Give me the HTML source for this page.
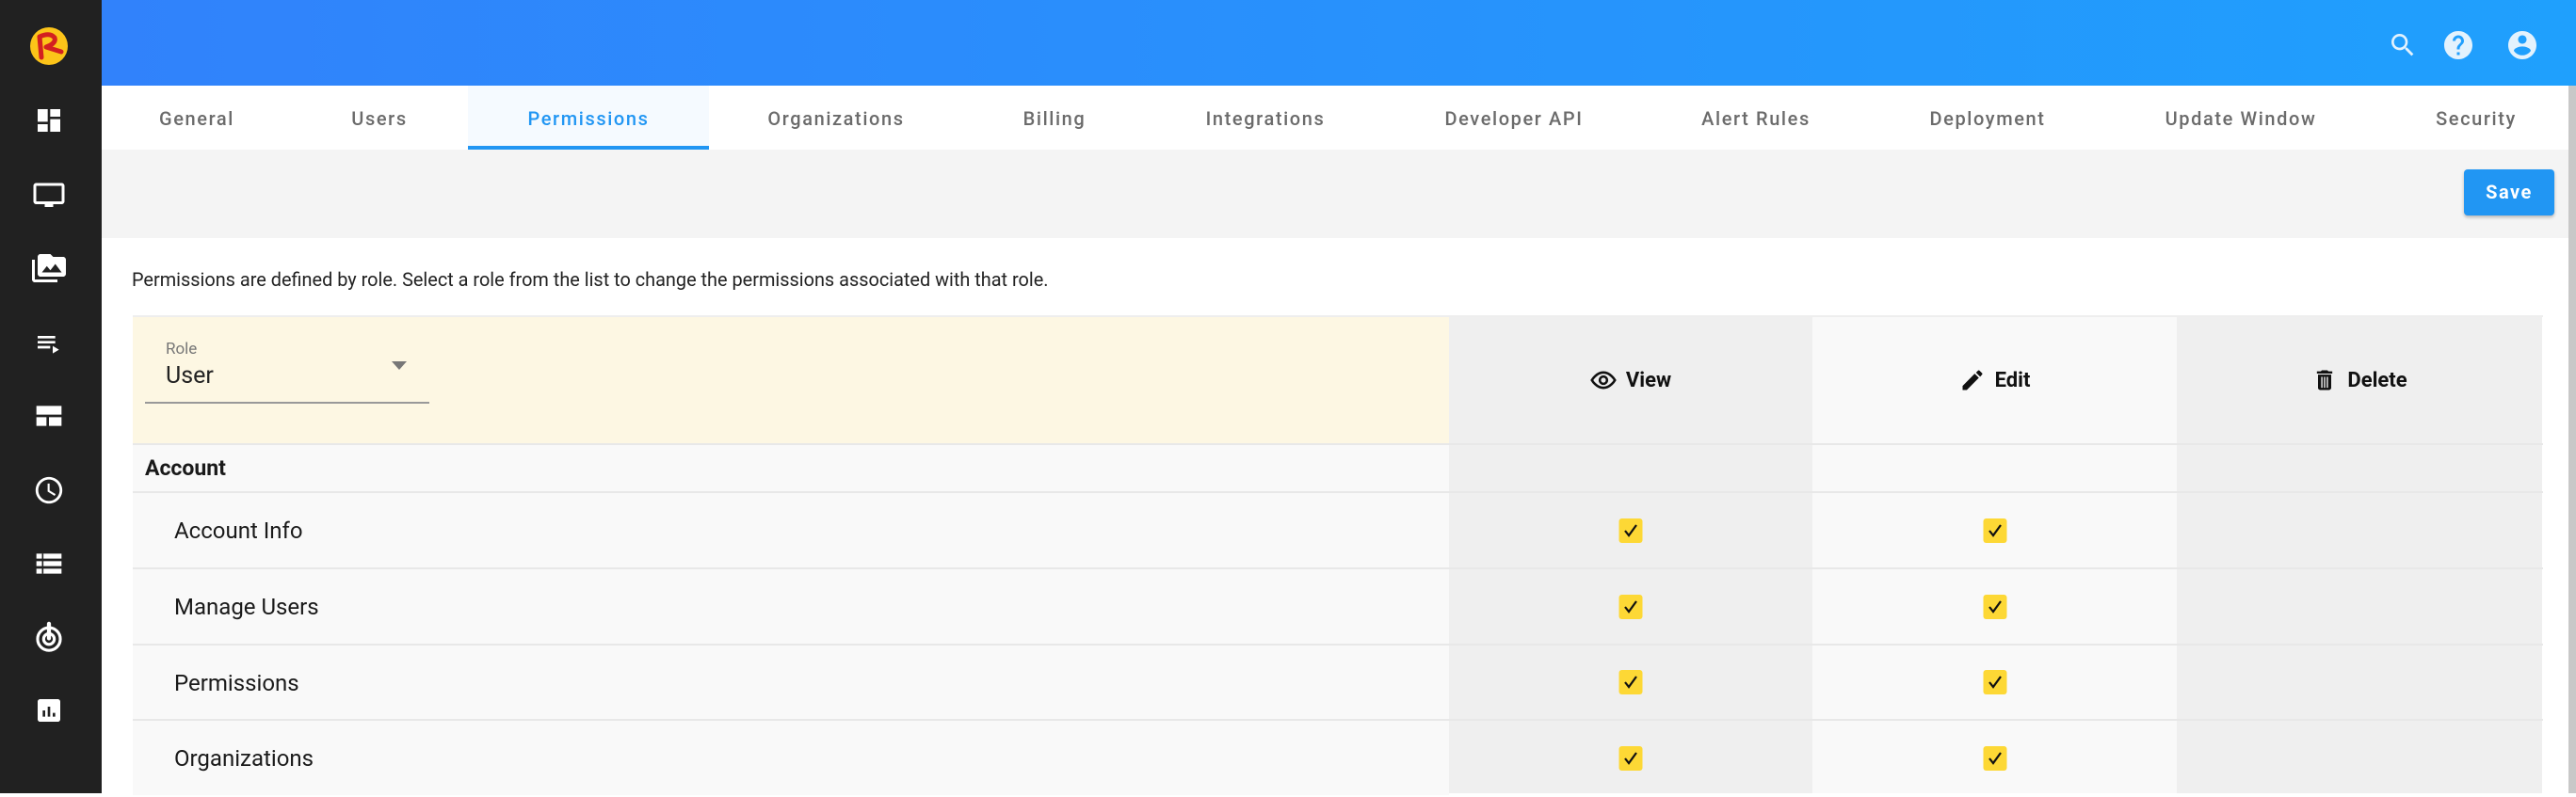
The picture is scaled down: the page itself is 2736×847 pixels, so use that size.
<!DOCTYPE html>
<html><head><meta charset="utf-8"><style>
*{margin:0;padding:0;box-sizing:border-box}
body{width:2736px;height:843px;overflow:hidden;position:relative;background:#fff;font-family:"Roboto","Liberation Sans",sans-serif;}
.abs{position:absolute}
#side{left:0;top:0;width:108px;height:843px;background:#212121}
#head{left:108px;top:0;width:2628px;height:91px;background:linear-gradient(90deg,#3182fb,#1fa0fd)}
#tabs{left:108px;top:91px;width:2620px;height:68px;background:#fff}
.tab{position:absolute;top:0;height:68px;line-height:70px;font-size:20px;color:#6b6b6b;letter-spacing:1.6px;font-weight:500;transform:translateX(-50%);white-space:nowrap}
#tool{left:108px;top:159px;width:2620px;height:94px;background:#f4f4f4}
#save{left:2617px;top:180px;width:96px;height:49px;background:#2196f3;border-radius:4px;color:#fff;font-weight:bold;font-size:20px;letter-spacing:1.5px;text-align:center;line-height:49px;box-shadow:0 2px 3px rgba(0,0,0,.25)}
#desc{left:140px;top:286px;font-size:19.9px;color:#222;white-space:nowrap}
.cell{position:absolute}
.hl{font-size:22px;font-weight:bold;color:#111;display:flex;align-items:center;justify-content:center;gap:10px}
.row{position:absolute;left:141px;width:1398px;height:81px;border-top:2px solid #ececec;background:#f9f9f9}
.rt{position:absolute;left:44px;top:0;line-height:81px;font-size:24px;color:#1a1a1a}
.ln{position:absolute;left:141px;width:2560px;height:2px;background:#e8e8e8}
</style></head><body>
<div id="side" class="abs">
<svg class="abs" style="left:31px;top:28px" width="42" height="42" viewBox="0 0 42 42"><circle cx="21" cy="21" r="20" fill="#fcc419"/><path d="M13 33 L11 11 Q22 6 27 12 Q29 18 18 22 L34 27" fill="none" stroke="#d32020" stroke-width="5" stroke-linecap="round" stroke-linejoin="round"/></svg>
<svg class="abs" style="left:36px;top:112px" width="32" height="32" viewBox="0 0 24 24" fill="#fff"><path d="M3 13h8V3H3v10zm0 8h8v-6H3v6zm10 0h8V11h-8v10zm0-18v6h8V3h-8z"/></svg>
<svg class="abs" style="left:34px;top:190px" width="36" height="36" viewBox="0 0 24 24" fill="#fff"><path d="M21 3H3c-1.1 0-2 .9-2 2v11c0 1.1.9 2 2 2h6v2h6v-2h6c1.1 0 2-.9 2-2V5c0-1.1-.9-2-2-2zm0 13H3V5h18v11z"/></svg>
<svg class="abs" style="left:34px;top:267px" width="36" height="36" viewBox="0 0 24 24" fill="#fff"><path d="M2 6H0v14c0 1.1.9 2 2 2h16v-2H2V6zm20-2h-7l-2-2H6c-1.1 0-2 .9-2 2v12c0 1.1.9 2 2 2h16c1.1 0 2-.9 2-2V6c0-1.1-.9-2-2-2zM7 15l3.5-4.5 2.5 3 3.5-4.5 4.5 6H7z"/></svg>
<svg class="abs" style="left:36px;top:349px" width="32" height="32" viewBox="0 0 24 24" fill="#fff"><path d="M3 6h14v2H3zm0 4h14v2H3zm0 4h10v2H3zm12 0v6l5-3z"/></svg>
<svg class="abs" style="left:36px;top:426px" width="32" height="32" viewBox="0 0 24 24" fill="#fff"><path d="M2 4h20v7H2zM2 13h8v7H2zM12 13h10v7H12z"/></svg>
<svg class="abs" style="left:35px;top:504px" width="34" height="34" viewBox="0 0 24 24" fill="#fff"><path d="M12 2C6.5 2 2 6.5 2 12s4.5 10 10 10 10-4.5 10-10S17.5 2 12 2zm0 18c-4.4 0-8-3.6-8-8s3.6-8 8-8 8 3.6 8 8-3.6 8-8 8zm.5-13H11v6l5.2 3.2.8-1.3-4.5-2.7V7z"/></svg>
<svg class="abs" style="left:36px;top:583px" width="32" height="32" viewBox="0 0 24 24" fill="#fff"><path d="M2 4h20v4H2zM2 10h20v4H2zM2 16h20v4H2z" /><path d="M7 4v16" stroke="#212121" stroke-width="1.2"/></svg>
<svg class="abs" style="left:35px;top:660px" width="34" height="34" viewBox="0 0 24 24" fill="none" stroke="#fff" stroke-width="2.2"><circle cx="12" cy="13.5" r="8.5"/><circle cx="12" cy="13.5" r="4"/><path d="M12 2v11" stroke-width="3" stroke-linecap="round"/></svg>
<svg class="abs" style="left:36px;top:739px" width="32" height="32" viewBox="0 0 24 24" fill="#fff"><path d="M19 3H5c-1.1 0-2 .9-2 2v14c0 1.1.9 2 2 2h14c1.1 0 2-.9 2-2V5c0-1.1-.9-2-2-2zM9 17H7v-5h2v5zm4 0h-2V9h2v8zm4 0h-2v-3h2v3z"/></svg>
</div>
<div id="head" class="abs">
<svg class="abs" style="left:2428px;top:32px" width="32" height="32" viewBox="0 0 24 24" fill="#e3f2fd"><path d="M15.5 14h-.8l-.3-.3c1-1.1 1.6-2.6 1.6-4.2C16 5.9 13.1 3 9.5 3S3 5.9 3 9.5 5.9 16 9.5 16c1.6 0 3.1-.6 4.2-1.6l.3.3v.8l5 5 1.5-1.5-5-5zm-6 0C7 14 5 12 5 9.5S7 5 9.5 5 14 7 14 9.5 12 14 9.5 14z"/></svg>
<svg class="abs" style="left:2485px;top:30px" width="36" height="36" viewBox="0 0 24 24" fill="#e3f2fd"><path d="M12 2C6.5 2 2 6.5 2 12s4.5 10 10 10 10-4.5 10-10S17.5 2 12 2zm1 17h-2v-2h2v2zm2.1-7.8l-.9.9C13.5 12.9 13 13.5 13 15h-2v-.5c0-1.100.4-2.1 1.2-2.8l1.2-1.3c.4-.4.6-.9.6-1.4 0-1.1-.9-2-2-2s-2 .9-2 2H8c0-2.2 1.8-4 4-4s4 1.8 4 4c0 .9-.4 1.7-.9 2.2z"/></svg>
<svg class="abs" style="left:2553px;top:30px" width="36" height="36" viewBox="0 0 24 24" fill="#e3f2fd"><path d="M12 2C6.5 2 2 6.5 2 12s4.5 10 10 10 10-4.5 10-10S17.5 2 12 2zm0 3c1.7 0 3 1.3 3 3s-1.3 3-3 3-3-1.3-3-3 1.3-3 3-3zm0 14.2c-2.5 0-4.7-1.3-6-3.2 0-2 4-3.1 6-3.1s6 1.1 6 3.1c-1.3 1.9-3.5 3.2-6 3.2z"/></svg>
</div>
<div id="tabs" class="abs">
<div class="abs" style="left:389px;top:0;width:256px;height:68px;background:#f5faff;border-bottom:4px solid #2196f3"></div>
<div class="tab" style="left:101px">General</div>
<div class="tab" style="left:295px">Users</div>
<div class="tab" style="left:517px;color:#2196f3">Permissions</div>
<div class="tab" style="left:780px">Organizations</div>
<div class="tab" style="left:1012px">Billing</div>
<div class="tab" style="left:1236px">Integrations</div>
<div class="tab" style="left:1500px">Developer API</div>
<div class="tab" style="left:1757px">Alert Rules</div>
<div class="tab" style="left:2003px">Deployment</div>
<div class="tab" style="left:2272px">Update Window</div>
<div class="tab" style="left:2522px">Security</div>
</div>
<div id="tool" class="abs"></div>
<div id="save" class="abs">Save</div>
<div class="abs" style="left:2728px;top:91px;width:8px;height:752px;background:#c8c8c8"></div>
<div id="desc" class="abs">Permissions are defined by role. Select a role from the list to change the permissions associated with that role.</div>

<div class="cell" style="left:141px;top:336px;width:1398px;height:136px;background:#fdf7e3"></div>
<div class="cell" style="left:1539px;top:336px;width:386px;height:507px;background:#efefef"></div>
<div class="cell" style="left:1925px;top:336px;width:387px;height:507px;background:#f9f9f9"></div>
<div class="cell" style="left:2312px;top:336px;width:388px;height:507px;background:#efefef"></div>
<div class="ln" style="top:335px;height:2px;background:#eee"></div>

<div class="abs" style="left:176px;top:361px;font-size:17px;color:#777">Role</div>
<div class="abs" style="left:176px;top:385px;font-size:25px;color:#222">User</div>
<div class="abs" style="left:416px;top:384px;width:0;height:0;border-left:8px solid transparent;border-right:8px solid transparent;border-top:9px solid #777"></div>
<div class="abs" style="left:154px;top:427px;width:302px;height:2px;background:#999"></div>

<div class="cell hl" style="left:1539px;top:336px;width:386px;height:136px">
<svg width="28" height="28" viewBox="0 0 24 24" fill="none" stroke="#111" stroke-width="2.2"><path d="M1.5 12S5.5 5 12 5s10.5 7 10.5 7-4 7-10.5 7S1.5 12 1.5 12z"/><circle cx="12" cy="12" r="3.3"/></svg>View</div>
<div class="cell hl" style="left:1925px;top:336px;width:387px;height:136px">
<svg width="28" height="28" viewBox="0 0 24 24" fill="#111"><path d="M3 17.2V21h3.8L17.8 9.9l-3.8-3.8L3 17.2zM20.7 7c.4-.4.4-1 0-1.4l-2.3-2.3c-.4-.4-1-.4-1.4 0l-1.8 1.8 3.8 3.8L20.7 7z"/></svg>Edit</div>
<div class="cell hl" style="left:2312px;top:336px;width:388px;height:136px">
<svg width="28" height="28" viewBox="0 0 24 24" fill="#111"><path d="M6 19c0 1.1.9 2 2 2h8c1.1 0 2-.9 2-2V7H6v12zM19 4h-3.5l-1-1h-5l-1 1H5v2h14V4z"/><path d="M9.5 9v10M12 9v10M14.5 9v10" stroke="#efefef" stroke-width="1.2"/></svg>Delete</div>

<div class="row" style="top:471px;height:51px"><div class="rt" style="left:13px;line-height:49px;font-weight:bold;font-size:23px">Account</div></div>
<div class="row" style="top:522px"><div class="rt">Account Info</div></div>
<div class="row" style="top:603px"><div class="rt">Manage Users</div></div>
<div class="row" style="top:684px"><div class="rt">Permissions</div></div>
<div class="row" style="top:764px"><div class="rt">Organizations</div></div>
<div class="ln" style="top:471px"></div>
<div class="ln" style="top:522px"></div>
<div class="ln" style="top:603px"></div>
<div class="ln" style="top:684px"></div>
<div class="ln" style="top:764px"></div>

<svg class="abs" style="left:0;top:0" width="2736" height="843">
<defs><g id="c"><rect x="-12.5" y="-13" width="25" height="26" rx="3" fill="#fdd835"/><path d="M-6 0 L-2 5 L6 -6" fill="none" stroke="#111" stroke-width="2.2"/></g></defs>
<use href="#c" x="1732" y="564"/><use href="#c" x="2119" y="564"/>
<use href="#c" x="1732" y="645"/><use href="#c" x="2119" y="645"/>
<use href="#c" x="1732" y="725"/><use href="#c" x="2119" y="725"/>
<use href="#c" x="1732" y="806"/><use href="#c" x="2119" y="806"/>
</svg>
</body></html>
